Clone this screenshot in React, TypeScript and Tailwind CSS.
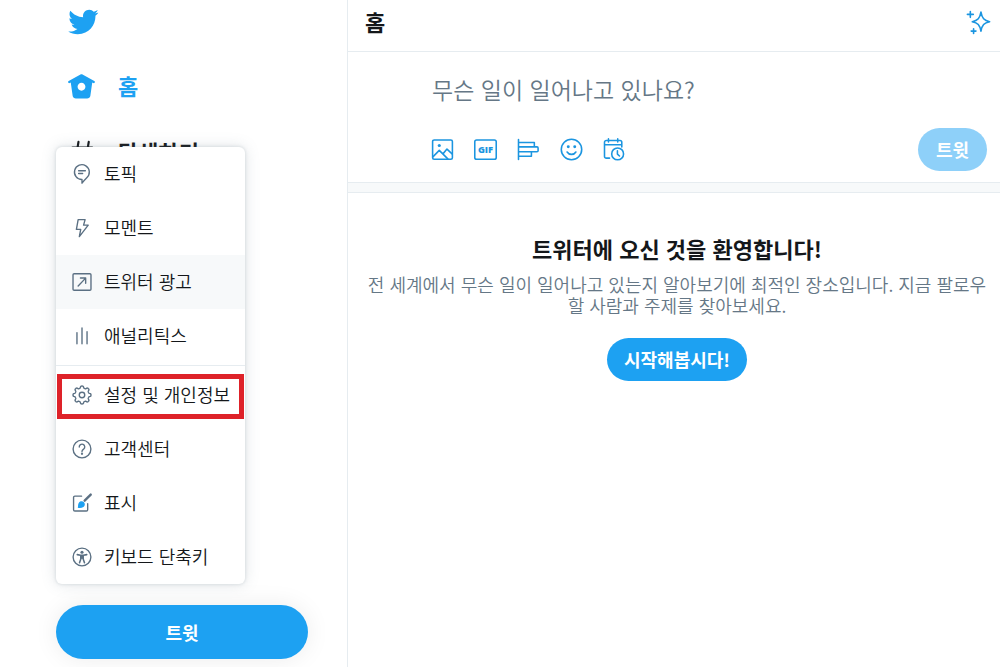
import type { ReactNode } from "react";
import clsx from "clsx";

interface IconProps {
  className?: string;
  children: ReactNode;
}

interface MenuItem {
  label: string;
  icon: ReactNode;
  active?: boolean;
  marked?: boolean;
}

// 24x24 outline icon, inherits the text color
function Icon({ className, children }: IconProps) {
  return (
    <svg
      viewBox="0 0 24 24"
      fill="none"
      stroke="currentColor"
      strokeWidth="1.5"
      strokeLinecap="round"
      strokeLinejoin="round"
      aria-hidden="true"
      className={clsx("shrink-0", className)}
    >
      {children}
    </svg>
  );
}

// Eight-lobed gear outline
const gearPath =
  Array.from({ length: 144 }, (_, i) => {
    const a = (i / 144) * Math.PI * 2;
    const r = 8.7 + 1.1 * Math.tanh(2.2 * Math.cos(8 * a));
    return `${i === 0 ? "M" : "L"}${(12 + r * Math.cos(a)).toFixed(2)} ${(12 + r * Math.sin(a)).toFixed(2)}`;
  }).join("") + "Z";

const primaryItems: MenuItem[] = [
  {
    label: "토픽",
    icon: (
      <>
        <path d="M12 22v-4a8.1 8.1 0 1 1 5.2-2c-1.6 1.6-3.6 3.6-5.2 6z" />
        <path d="M8.3 8.5h7.4M8.3 11.5h4.4" />
      </>
    ),
  },
  {
    label: "모멘트",
    icon: <path d="M7.8 2.8h7.6l-1.7 6h5.1L9.1 21.4l1.5-7.9H5.9z" />,
  },
  {
    label: "트위터 광고",
    active: true,
    icon: (
      <>
        <rect x="2.2" y="3" width="19.6" height="18" rx="1.2" />
        <path d="M7.8 16.4l8.2-8.6M10.3 7.6H16v5.8" />
      </>
    ),
  },
  {
    label: "애널리틱스",
    icon: <path d="M6.5 8.3v12.2M12 3.3v17.2M17.5 7.3v13.2" />,
  },
];

const secondaryItems: MenuItem[] = [
  {
    label: "설정 및 개인정보",
    marked: true,
    icon: (
      <>
        <path d={gearPath} />
        <circle cx="12" cy="12" r="3" />
      </>
    ),
  },
  {
    label: "고객센터",
    icon: (
      <>
        <circle cx="12" cy="12" r="9.7" />
        <path d="M9 9.8a3 3 0 1 1 4.9 2.2c-1.1.9-1.9 1.3-1.9 2.6" />
        <circle cx="12" cy="17.2" r=".5" fill="currentColor" />
      </>
    ),
  },
  {
    label: "표시",
    icon: (
      <>
        <path d="M11.5 4.5H4.2c-.8 0-1.4.6-1.4 1.4v13.4c0 .8.6 1.4 1.4 1.4h12.6c.8 0 1.4-.6 1.4-1.4v-6.6" />
        <path d="M21.5 2.8l-6.6 6.6" strokeWidth="2.6" />
        <path
          d="M7.4 17.2c.6-1.6-.1-3.8 1.2-5.5 1.4-1.9 4.2-2 5.6-.5 1.4 1.6 1.2 4-.6 5.2-1.8 1.1-4.1 1.2-6.2.8z"
          fill="#1da1f2"
          stroke="none"
        />
      </>
    ),
  },
  {
    label: "키보드 단축키",
    icon: (
      <>
        <circle cx="12" cy="12" r="9.7" />
        <circle cx="12" cy="6.8" r="1.7" fill="currentColor" stroke="none" />
        <path
          d="M6.8 9.4l3.6.7h3.2l3.6-.7M12 10.6v2.6M10.7 10.5v3.7l-1.4 4M13.3 10.5v3.7l1.4 4"
          strokeWidth="1.7"
        />
      </>
    ),
  },
];

const composeTools = [
  {
    label: "미디어",
    icon: (
      <>
        <rect x="2.5" y="2.8" width="19" height="18.6" rx="1.5" />
        <path d="M3 18.8l5.9-6 8.2 8.2M12.4 16.2l3.9-4.6 4.9 4.6" />
        <circle cx="8.9" cy="8.2" r="1.5" fill="currentColor" stroke="none" />
      </>
    ),
  },
  {
    label: "GIF",
    icon: (
      <>
        <rect x="1.7" y="2.8" width="20.6" height="18.6" rx="1.8" />
        <text
          x="12"
          y="15.4"
          textAnchor="middle"
          fill="currentColor"
          stroke="none"
          className="font-['Open_Sans',sans-serif] text-[9px] font-extrabold"
        >
          GIF
        </text>
      </>
    ),
  },
  {
    label: "투표",
    icon: (
      <path d="M2.4 2.5v19M2.4 5.2h15.2v4.3H2.4M2.4 9.5h17.8c.6 0 1 .4 1 1v2.6c0 .6-.4 1-1 1H2.4M2.4 14.1h12.4v4.3H2.4" />
    ),
  },
  {
    label: "이모티콘",
    icon: (
      <>
        <circle cx="12" cy="12" r="9.8" />
        <path d="M7.8 14.4c.9 1.5 2.4 2.3 4.2 2.3s3.3-.8 4.2-2.3" />
        <circle cx="8.9" cy="9.4" r="1.4" fill="currentColor" stroke="none" />
        <circle cx="15.1" cy="9.4" r="1.4" fill="currentColor" stroke="none" />
      </>
    ),
  },
  {
    label: "예약",
    icon: (
      <>
        <path d="M7.2 20.3H4.1c-.9 0-1.7-.7-1.7-1.6V5c0-.9.8-1.7 1.7-1.7h13.2c.9 0 1.7.8 1.7 1.7v4.5M2.4 7.4H19M6.2 1.8v3M15.1 1.8v3" />
        <circle cx="15" cy="16.2" r="5.7" />
        <path d="M14.8 13.2v3.2l2 1.8" />
      </>
    ),
  },
];

function MenuRow({ label, icon, active, marked }: MenuItem) {
  return (
    <a
      href="#"
      role="menuitem"
      className={clsx("relative flex h-[54px] items-center gap-[11px] pl-[15px] whitespace-nowrap", active && "bg-[#f7f9fa]")}
    >
      {marked && <span className="absolute inset-x-px top-1.5 h-[45px] border-5 border-[#de2229]" />}
      <Icon className="size-[22px] text-[#5b7083]">{icon}</Icon>
      <span className="pb-0.5">{label}</span>
    </a>
  );
}

function MoreMenu() {
  return (
    <div
      role="menu"
      className="absolute top-[147px] left-14 w-[189px] overflow-hidden rounded-md bg-white text-[18px] font-[350] shadow-[0_0_15px_rgba(101,119,134,0.2),0_0_3px_1px_rgba(101,119,134,0.15)]"
    >
      {primaryItems.map((item) => (
        <MenuRow key={item.label} {...item} />
      ))}
      <hr className="mt-0.5 mb-0.5 border-[#e6ecf0]" />
      {secondaryItems.map((item) => (
        <MenuRow key={item.label} {...item} />
      ))}
    </div>
  );
}

function Sidebar() {
  return (
    <header className="relative flex w-[348px] shrink-0 flex-col border-r border-[#e6ecf0]">
      <a href="#" aria-label="트위터" className="flex h-[54px] items-start pt-1.5 pl-[67px] text-[#1da1f2]">
        <svg viewBox="0 0 24 24" fill="currentColor" className="size-8" aria-hidden="true">
          <path d="M23.643 4.937c-.835.37-1.732.62-2.675.733.962-.576 1.7-1.49 2.048-2.578-.9.534-1.897.922-2.958 1.13-.85-.904-2.06-1.47-3.4-1.47-2.572 0-4.658 2.086-4.658 4.66 0 .364.042.718.12 1.06-3.873-.195-7.304-2.05-9.602-4.868-.4.69-.63 1.49-.63 2.342 0 1.616.823 3.043 2.072 3.878-.764-.025-1.482-.234-2.11-.583v.06c0 2.257 1.605 4.14 3.737 4.568-.392.106-.803.162-1.227.162-.3 0-.593-.028-.877-.082.593 1.85 2.313 3.198 4.352 3.234-1.595 1.25-3.604 1.995-5.786 1.995-.376 0-.747-.022-1.112-.065 2.062 1.323 4.51 2.093 7.14 2.093 8.57 0 13.255-7.098 13.255-13.254 0-.2-.005-.402-.014-.602.91-.658 1.7-1.477 2.323-2.41z" />
        </svg>
      </a>
      <nav className="text-[22px] font-bold">
        <a href="#" className="flex h-[65px] items-center gap-[22px] pl-[67px] text-[#1da1f2]">
          <svg viewBox="0 0 24 24" fill="currentColor" className="size-[29px]" aria-hidden="true">
            <path d="M22.58 7.35L12.475 1.897c-.297-.16-.654-.16-.95 0L1.425 7.35c-.486.264-.667.87-.405 1.356.18.335.525.525.88.525.16 0 .324-.038.475-.12l.734-.396 1.59 11.25c.216 1.214 1.31 2.062 2.66 2.062h9.282c1.35 0 2.444-.848 2.662-2.088l1.588-11.225.737.398c.485.263 1.092.082 1.354-.404.263-.486.08-1.093-.404-1.355zM12 15.435c-1.795 0-3.25-1.455-3.25-3.25s1.455-3.25 3.25-3.25 3.25 1.455 3.25 3.25-1.455 3.25-3.25 3.25z" />
          </svg>
          <span className="pb-0.5">홈</span>
        </a>
        <a href="#" className="flex h-[65px] items-center gap-[22px] pl-[67px]">
          <Icon className="size-[29px]">
            <path d="M9.5 4L6.8 20.5M18 4l-2.7 16.5M4.6 8.8h16.2M3.4 15.6h16.2" strokeWidth="1.8" />
          </Icon>
          <span>탐색하기</span>
        </a>
      </nav>
      <button
        type="button"
        className="mt-auto mr-[39px] mb-2 ml-14 h-[54px] rounded-full bg-[#1da1f2] text-[18px] font-bold text-white shadow-[0_0_24px_rgba(0,0,0,0.08)]"
      >
        트윗
      </button>
      <MoreMenu />
    </header>
  );
}

function Compose() {
  return (
    <form className="border-b border-[#e6ecf0] pt-4 pr-[13px] pb-[11px] pl-[73px]">
      <input
        type="text"
        aria-label="트윗 내용"
        placeholder="무슨 일이 일어나고 있나요?"
        className="mb-4 block h-11 w-full px-[11px] pb-0.5 text-[23px] font-[350] outline-none placeholder:text-[#657786]"
      />
      <div className="flex items-center justify-between">
        <div className="flex text-[#1b95e0]">
          {composeTools.map(({ label, icon }) => (
            <button key={label} type="button" aria-label={label} className="flex size-[43px] items-center justify-center">
              <Icon className="size-[25px]">{icon}</Icon>
            </button>
          ))}
        </div>
        <button
          type="button"
          className="h-[43px] w-[69px] rounded-full bg-[#8ed0f9] text-[18px] font-bold text-white"
        >
          트윗
        </button>
      </div>
    </form>
  );
}

export default function App() {
  return (
    <div
      lang="ko"
      className="flex min-h-screen bg-white font-['Noto_Sans_CJK_KR',sans-serif] text-[#14171a]"
    >
      <Sidebar />
      <main className="min-w-0 flex-1">
        <div className="flex h-[52px] items-center justify-between border-b border-[#e6ecf0] pr-2 pb-2 pl-[17px]">
          <h1 className="text-[22px] font-bold">홈</h1>
          <button type="button" aria-label="인기 트윗" className="text-[#1b95e0]">
            <Icon className="size-[26px]">
              <path d="M13.8 2.9c1 5.6 2.9 7.8 8 8.8-5.1 1-7 3.2-8 8.8-1-5.6-2.9-7.8-8-8.8 5.1-1 7-3.2 8-8.8z" />
              <path d="M4 2.3v5.4M1.3 5h5.4M7 18.2v4.4M4.8 20.4h4.4" />
            </Icon>
          </button>
        </div>
        <Compose />
        <div className="h-2.5 border-b border-[#e6ecf0] bg-[#f7f9fa]" />
        <section className="flex flex-col items-center pt-[41px] pr-3 pl-[18px] text-center">
          <h2 className="text-[22px] leading-7 font-bold">트위터에 오신 것을 환영합니다!</h2>
          <p className="mt-3 text-[18px] leading-[21px] font-[350] text-[#657786]">
            전 세계에서 무슨 일이 일어나고 있는지 알아보기에 최적인 장소입니다. 지금 팔로우할 사람과 주제를 찾아보세요.
          </p>
          <button
            type="button"
            className="mt-[22px] h-[43px] rounded-full bg-[#1da1f2] px-[17px] text-[18px] font-bold text-white"
          >
            시작해봅시다!
          </button>
        </section>
      </main>
    </div>
  );
}
